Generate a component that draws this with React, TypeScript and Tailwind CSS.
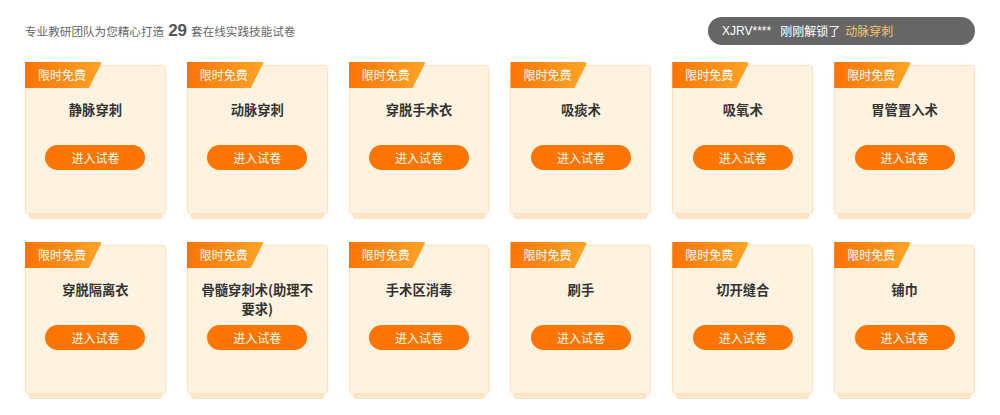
import React from "react";

const items = [
  "静脉穿刺",
  "动脉穿刺",
  "穿脱手术衣",
  "吸痰术",
  "吸氧术",
  "胃管置入术",
  "穿脱隔离衣",
  "骨髓穿刺术(助理不要求)",
  "手术区消毒",
  "刷手",
  "切开缝合",
  "铺巾",
];

function Card({ title }: { title: string }) {
  return (
    <div className="relative h-[149px]">
      <div className="absolute left-[4px] right-[4px] -bottom-[5px] h-[12px] rounded-b-[3px] border border-[#fde0bd] bg-[#ffe9cc]" />
      <div className="relative h-full rounded-[4px] border border-[#fde3c4] bg-[#fef3e1] shadow-[0_1px_4px_rgba(250,200,140,0.25)] pt-[34px] flex flex-col items-center">
        <div className="absolute -top-[4px] -left-[1px] h-[26px] w-[77px] rounded-tr-[3px] bg-gradient-to-r from-[#ff7300] to-[#ffa426] [clip-path:polygon(0_0,100%_0,83%_100%,0_100%)] flex items-center pl-[13px] text-[12px] text-white">
          限时免费
        </div>
        <div className="h-[45px] w-full px-[10px] text-center text-[13.3px] font-bold leading-[19px] text-[#333]">
          {title}
        </div>
        <button className="h-[25px] w-[100px] rounded-full bg-[#ff7500] text-[12px] text-white leading-[25px]">
          进入试卷
        </button>
      </div>
    </div>
  );
}

export default function App() {
  return (
    <div
      className="w-[1000px] h-[415px] bg-white pl-[25px] pt-[17px]"
      style={{ fontFamily: '"Noto Sans CJK SC", "Noto Sans", sans-serif' }}
    >
      <div className="w-[950px] flex items-center justify-between h-[28px]">
        <div className="flex items-baseline text-[11.6px] text-[#666]">
          <span>专业教研团队为您精心打造</span>
          <span className="mx-[4px] text-[17px] font-bold text-[#555]" style={{ fontFamily: '"Liberation Sans", Arial, sans-serif' }}>29</span>
          <span>套在线实践技能试卷</span>
        </div>
        <div className="h-[28px] w-[267px] rounded-full bg-[#666] flex items-center pl-[14px] text-[12px] text-white">
          <span style={{ fontFamily: '"Liberation Sans", Arial, sans-serif' }}>XJRV****</span>
          <span className="ml-[9px]">刚刚解锁了</span>
          <span className="ml-[5px] text-[#f5c46c]">动脉穿刺</span>
        </div>
      </div>
      <div className="mt-[20px] w-[950px] grid grid-cols-6 gap-x-[21px] gap-y-[31px]">
        {items.map((t) => (
          <Card key={t} title={t} />
        ))}
      </div>
    </div>
  );
}
